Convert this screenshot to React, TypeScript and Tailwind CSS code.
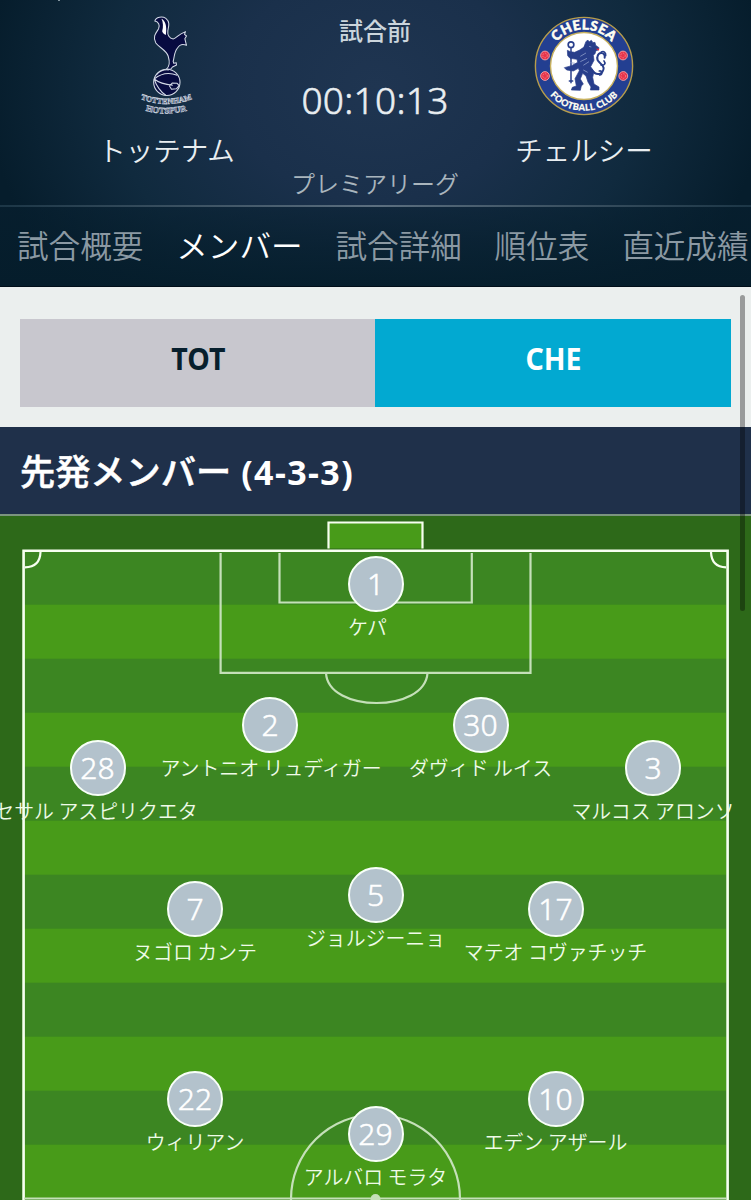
const players = [
  { number: 1, name: 'ケパ', x: 375.5, y: 68, shift: -8 },
  { number: 2, name: 'アントニオ リュディガー', x: 270, y: 209, shift: 1 },
  { number: 30, name: 'ダヴィド ルイス', x: 480.5, y: 209 },
  { number: 28, name: 'セサル アスピリクエタ', x: 97.5, y: 252, shift: -1.5 },
  { number: 3, name: 'マルコス アロンソ', x: 653, y: 252 },
  { number: 5, name: 'ジョルジーニョ', x: 375.5, y: 378.5 },
  { number: 7, name: 'ヌゴロ カンテ', x: 195, y: 393 },
  { number: 17, name: 'マテオ コヴァチッチ', x: 555.5, y: 393 },
  { number: 22, name: 'ウィリアン', x: 195, y: 583 },
  { number: 10, name: 'エデン アザール', x: 555.5, y: 583 },
  { number: 29, name: 'アルバロ モラタ', x: 375.5, y: 618 },
];

const tabs = ['試合概要', 'メンバー', '試合詳細', '順位表', '直近成績'];

function TottenhamCrest() {
  return (
    <svg viewBox="49.5 39 180 318" className="h-[106px] w-[60px] overflow-visible">
      <g fill="#070b40" stroke="#d3dae6" strokeWidth="3.2" strokeLinejoin="round">
        <path d="M103 63 C106 50 126 48 136 55 C149 65 145 79 142 92 C140 105 147 115 158 117 C169 115 173 102 195 95 L192 103 L198 108 L193 116 L198 136 C187 131 177 134 171 144 C161 155 162 170 158 184 L160 190 L167 188 L168 195 L156 201 L151 207 L137 208 C149 199 148 184 143 168 C137 150 115 142 106 129 C95 111 107 98 114 87 C120 75 113 65 103 63 Z" />
        <circle cx="139" cy="247" r="39.500" />
        <path fill="none" d="M101 237 C120 222 145 216 170 226 M101 237 C116 249 138 254 157 256 M101 237 C107 257 122 278 136 286 M108 224 C119 212 132 208 145 210 M147 258 L155 249 L170 250 L176 257 L168 266 L153 268 Z" />
      </g>
      <path fill="#fff" d="M123 56 C134 62 140 75 136 105 C130 103 127 100 125 94 C129 80 128 67 123 56Z" />
      <path id="spurs-upper" d="M61 297 Q138 327 214 297" fill="none" />
      <path id="spurs-lower" d="M72 331 Q138 350 202 331" fill="none" />
      <g fill="#18234c" stroke="#c3ccd9" strokeWidth="2" fontFamily="Liberation Serif, serif" fontWeight="700" textAnchor="middle">
        <text fontSize="24"><textPath href="#spurs-upper" startOffset="50%">TOTTENHAM</textPath></text>
        <text fontSize="26"><textPath href="#spurs-lower" startOffset="50%">HOTSPUR</textPath></text>
      </g>
    </svg>
  );
}

function Rosette({ x, y }: { x: number; y: number }) {
  return (
    <g>
      <circle cx={x} cy={y} r="4.4" fill="#e8344b" stroke="#f5a5a8" strokeWidth=".9" />
      <circle cx={x} cy={y} r="2.3" fill="none" stroke="#f8a6aa" strokeWidth=".6" strokeDasharray="1.4 1" />
    </g>
  );
}

function ChelseaCrest() {
  return (
    <svg viewBox="0 0 100 100" className="h-[100px] w-[100px]">
      <circle cx="50" cy="50" r="48.600" fill="#233f91" stroke="#b79d4c" strokeWidth="1.400" />
      <circle cx="50" cy="50" r="33.500" fill="#fff" stroke="#c8b15d" strokeWidth="1.400" />
      <path id="che-upper" d="M13.500 50 A36.500 36.500 0 0 1 86.500 50" fill="none" />
      <path id="che-lower" d="M5.200 50 A44.800 44.800 0 0 0 94.800 50" fill="none" />
      <g fill="#fffef2" stroke="#fffef2" fontFamily="Lato, Liberation Sans, sans-serif" fontWeight="900" textAnchor="middle">
        <text fontSize="13.500" strokeWidth=".5"><textPath href="#che-upper" startOffset="50%" textLength="62">CHELSEA</textPath></text>
        <text fontSize="9.200" strokeWidth=".2"><textPath href="#che-lower" startOffset="50%" textLength="77">FOOTBALL CLUB</textPath></text>
      </g>
      <Rosette x={11} y={39.500} />
      <Rosette x={89} y={39.500} />
      <Rosette x={11} y={60} />
      <Rosette x={89.300} y={60} />
      <g transform="translate(-14 -16) scale(.33333)">
        <g fill="#283e8b" stroke="#283e8b" strokeLinejoin="round" strokeLinecap="round">
          <circle cx="153" cy="134" r="8.500" fill="#fff" strokeWidth="5" />
          <path strokeWidth="4.500" d="M153 143 V248 M148 243 H158" />
          <path strokeWidth="2" d="M198 125 L203 120 L208 125 L214 121 L219 128 L225 127 L227 136 L237 143 L235 150 L228 152 L225 161 L220 166 L222 181 L212 200 L222 215 L218 232 L222 252 L237 261 L237 270 L211 270 L213 261 L204 246 L198 228 L188 220 L181 237 L190 252 L184 258 L181 271 L154 270 L157 262 L169 258 L165 236 L178 212 L175 205 L160 213 L140 210 L133 203 L155 197 L173 187 L171 178 L150 175 L143 167 L142 151 L151 155 L164 157 L179 150 L191 142 Z" />
          <path fill="none" strokeWidth="6" d="M215 209 C231 233 250 220 251 204 C248 188 228 188 232 172 C235 154 257 156 254 173" />
          <path fill="none" strokeWidth="5" d="M239 225 C248 223 248 211 238 213 M243 195 C254 197 258 190 252 183 M244 156 C252 151 258 160 257 167" />
        </g>
        <path d="M181 169 L198 159 M181 185 L201 175 M190 196 L207 185 M207 139 L214 141 M190 210 L203 217 M151 188 L165 190" stroke="#8999c7" strokeWidth="2.500" fill="none" />
        <path d="M227 146 L238 146 L236 152Z" fill="#ee2638" />
      </g>
    </svg>
  );
}

function Pitch() {
  return (
    <svg viewBox="0 0 751 684" className="block h-[684px] w-[751px]">
      <rect width="751" height="684" fill="#2d6919" />
      <rect x="22" y="34" width="707" height="650" fill="#3c8622" />
      {[88.7, 196.7, 304.7, 412.7, 520.7, 628.7].map((y) => (
        <rect key={y} x="24" y={y} width="702" height="54" fill="#489b19" />
      ))}
      <rect x="328.500" y="6.500" width="94" height="26" fill="#489b19" />
      <g fill="none" stroke="#f7fff0">
        <path strokeWidth="2.200" d="M328.500 32.500 V6.500 H422.500 V32.500" />
        <path strokeWidth="2.600" d="M23.600 690 V34.800 H727.600 V690" />
        <path strokeWidth="2.200" d="M40.500 36 Q40 51 25 51.300 M711 36 Q711.500 51 726 51.300" />
      </g>
      <g fill="none" stroke="#c5e0b9" strokeWidth="2.200">
        <path d="M220.600 37 V156.800 H530.500 V37" />
        <path d="M279.500 37 V86.500 H471.800 V37" />
        <path d="M326 157 C328 197 425 197 427.500 157" />
        <circle cx="375.500" cy="683" r="84.500" />
        <path d="M24 682.500 H727" />
      </g>
      <circle cx="375.500" cy="683" r="5" fill="#c5e0b9" />
    </svg>
  );
}

export default function App() {
  return (
    <main className="relative flex h-[1200px] w-[751px] flex-col overflow-hidden bg-[#ebefee] font-['Noto_Sans','Noto_Sans_CJK_JP',sans-serif]">
      <header className="flex h-[287px] flex-col border-b border-[#000e19] bg-[#061d2c] bg-[radial-gradient(ellipse_410px_330px_at_50%_30%,#1f3551_0%,#1a304b_35%,#102a3e_65%,#061d2c_95%)] text-[#e9eef1]">
        <div className="grid h-[205px] grid-cols-[333px_84px_334px]">
          <div className="flex flex-col items-center pt-[13px]">
            <TottenhamCrest />
            <p className="mt-[9px] font-['Noto_Sans_CJK_JP',sans-serif] text-[27.500px] leading-[42px] font-[350]">トッテナム</p>
          </div>
          <div className="flex flex-col items-center whitespace-nowrap">
            <p className="pt-3 font-['Noto_Sans_CJK_JP',sans-serif] text-[24px] leading-9 font-medium text-[#cbd5dc]">試合前</p>
            <time className="mt-6 text-[37px] leading-[56px] font-light tracking-[0.3px] [-webkit-text-stroke:0.6px]">00:10:13</time>
            <p className="mt-[37px] font-['Noto_Sans_CJK_JP',sans-serif] text-[24px] leading-9 font-[350] text-[#a9b5bd]">プレミアリーグ</p>
          </div>
          <div className="flex flex-col items-center pt-4">
            <ChelseaCrest />
            <p className="mt-3 font-['Noto_Sans_CJK_JP',sans-serif] text-[27.500px] leading-[42px] font-[350]">チェルシー</p>
          </div>
        </div>
        <div className="h-0.5 shrink-0 bg-linear-to-r from-[#1c3646] via-[#5c6f80] to-[#1c3646]" />
        <nav className="flex flex-1 gap-[32.800px] bg-linear-to-b from-[#071f2f]/50 to-[#051d2b]/90 pt-[13px] pl-[17px] font-['Noto_Sans_CJK_JP',sans-serif] text-[31.600px] leading-[48px] font-[350] whitespace-nowrap">
          {tabs.map((tab, i) => (
            <a key={tab} className={i === 1 ? 'text-white' : 'text-[#8b99a3]'}>{tab}</a>
          ))}
        </nav>
      </header>

      <div className="flex h-[140px] shrink-0 px-5 pt-8 pb-5 text-[31px] leading-[78px] font-bold">
        <button className="w-[355px] bg-[#c8c7ce] pb-2.5 pl-px text-[#071f2d]"><span className="inline-block scale-x-[0.92]">TOT</span></button>
        <button className="w-[356px] bg-[#02a9d1] pb-2.5 text-white"><span className="inline-block scale-x-[0.92]">CHE</span></button>
      </div>

      <h1 className="flex h-[89px] shrink-0 items-center gap-2.5 border-b-2 border-[#7b947f] bg-[#1f304a] pl-5 text-[35.200px] font-bold text-white">
        <span className="font-['Noto_Sans_CJK_JP',sans-serif] font-medium [-webkit-text-stroke:0.5px]">先発メンバー</span>
        <span className="relative top-0.5 text-[34px] tracking-[1.400px]">(4-3-3)</span>
      </h1>

      <section className="relative h-[684px] shrink-0">
        <Pitch />
        {players.map((p) => (
          <div key={p.number} className="absolute flex w-0 flex-col items-center whitespace-nowrap text-white" style={{ left: p.x, top: p.y - 28 }}>
            <span className="flex size-14 shrink-0 items-center justify-center rounded-full border-2 border-[#f8fff8] bg-[#b3c2cc] text-[30px] leading-none font-light [-webkit-text-stroke:0.5px]">{p.number}</span>
            <span className="font-['Noto_Sans_CJK_JP',sans-serif] text-[19.900px] leading-[29px] font-[350] text-[#effbe8]" style={{ transform: `translateX(${p.shift ?? 0}px)` }}>{p.name}</span>
          </div>
        ))}
      </section>

      <div className="absolute top-[295px] left-[740px] h-[316px] w-[5px] rounded-full bg-black/35" />
      <div className="absolute top-0 left-[58px] h-px w-0.5 bg-[#8295a0]" />
    </main>
  );
}
